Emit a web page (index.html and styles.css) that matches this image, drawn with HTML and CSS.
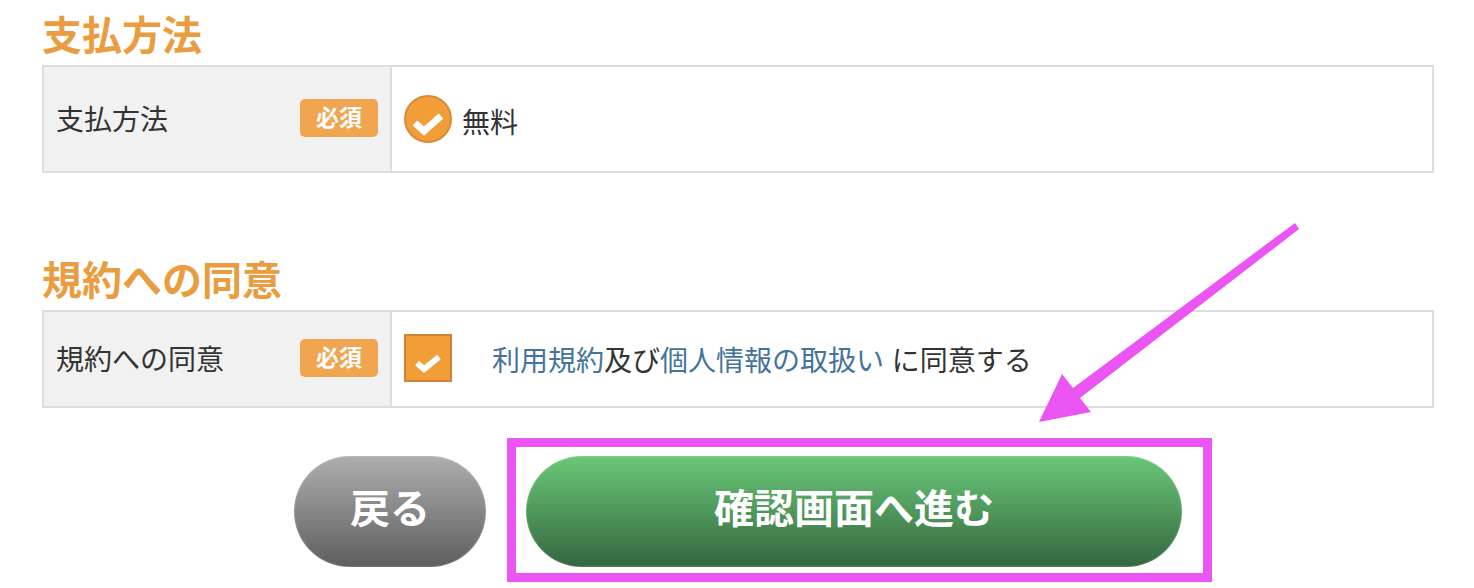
FILE: index.html
```html
<!DOCTYPE html>
<html lang="ja">
<head>
  <meta charset="UTF-8">
  <title>支払方法</title>
  <link rel="stylesheet" href="styles.css">
</head>
<body>
  <div class="page">
    <h2 class="midashi">支払方法</h2>
    <div class="fila fila-pago">
      <div class="etiqueta">
        <span>支払方法</span>
        <span class="hissu">必須</span>
      </div>
      <div class="valor">
        <svg class="icono" viewBox="0 0 48 48">
          <circle cx="24" cy="24" r="23" fill="#f19e38" stroke="#d98a35" stroke-width="2"/>
          <path d="M11 28l9 8 17-15" fill="none" stroke="#fff" stroke-width="7"/>
        </svg>
        <span class="muryo">無料</span>
      </div>
    </div>

    <h2 class="midashi segundo">規約への同意</h2>
    <div class="fila fila-kiyaku">
      <div class="etiqueta">
        <span>規約への同意</span>
        <span class="hissu">必須</span>
      </div>
      <div class="valor">
        <svg class="icono caja" viewBox="0 0 48 48">
          <rect x="1" y="1" width="46" height="46" fill="#f19e38" stroke="#cf8237" stroke-width="2"/>
          <path d="M13 29l7 6 15-12" fill="none" stroke="#fff" stroke-width="6"/>
        </svg>
        <span class="acuerdo"><a href="#">利用規約</a>及び<a href="#">個人情報の取扱い</a> に同意する</span>
      </div>
    </div>

    <div class="botones">
      <a class="boton volver" href="#">戻る</a>
      <a class="boton avanzar" href="#">確認画面へ進む</a>
    </div>
  </div>

  <div class="marca"></div>
  <svg class="flecha" viewBox="0 0 1474 588">
    <path d="M1295 223L1299 229L1080 398L1091 412L1039 422L1062 374L1073 388Z" fill="#ea55f4"/>
  </svg>
</body>
</html>
```

FILE: styles.css
```css
body {
  margin: 0;
  background-color: #fff;
  color: #333;
  font-family: "Liberation Sans", "Noto Sans CJK JP", sans-serif;
}
a {
  text-decoration: none;
}
.page {
  width: 1392px;
  height: 588px;
  margin-left: 42px;
  padding-top: 11px;
  box-sizing: border-box;
}
.midashi {
  margin: 0;
  height: 54px;
  line-height: 50px;
  font-size: 40px;
  font-weight: bold;
  color: #ea9c41;
}
.midashi.segundo {
  margin-top: 83px;
}
.fila {
  display: grid;
  grid-template-columns: 348px 1fr;
  border: 2px solid #ddd;
  box-sizing: border-box;
  font-size: 28px;
}
.fila-pago {
  height: 108px;
}
.fila-kiyaku {
  height: 98px;
}
.etiqueta {
  display: flex;
  align-items: center;
  justify-content: space-between;
  padding: 0 12px 2px 12px;
  background-color: #f1f1f1;
  border-right: 2px solid #ddd;
}
.hissu {
  width: 78px;
  height: 38px;
  line-height: 38px;
  text-align: center;
  font-size: 23px;
  font-weight: bold;
  color: #fff;
  background-color: #f1a550;
  border-radius: 5px;
}
.valor {
  display: flex;
  align-items: center;
  padding-left: 12px;
}
.icono {
  width: 48px;
  height: 48px;
  margin-right: 10px;
  flex: none;
}
.caja {
  margin-bottom: 2px;
}
.muryo {
  padding-top: 3px;
}
.acuerdo {
  margin-left: 30px;
}
.acuerdo a {
  color: #44739c;
}
.botones {
  display: flex;
  justify-content: center;
  gap: 40px;
  margin-top: 48px;
}
.boton {
  height: 111px;
  line-height: 107px;
  border-radius: 56px;
  text-align: center;
  font-size: 40px;
  font-weight: bold;
  color: #fff;
  box-shadow: inset 0 0 2px rgba(255,255,255,0.5);
}
.volver {
  width: 192px;
  background: linear-gradient(#aeaeae, #5e5e5e);
}
.avanzar {
  width: 656px;
  background: linear-gradient(#69c878, #35663f);
}
.marca {
  position: absolute;
  left: 507px;
  top: 438px;
  width: 705px;
  height: 144px;
  box-sizing: border-box;
  border: 9px solid #ea55f4;
}
.flecha {
  position: absolute;
  left: 0;
  top: 0;
  width: 1474px;
  height: 588px;
}
```
